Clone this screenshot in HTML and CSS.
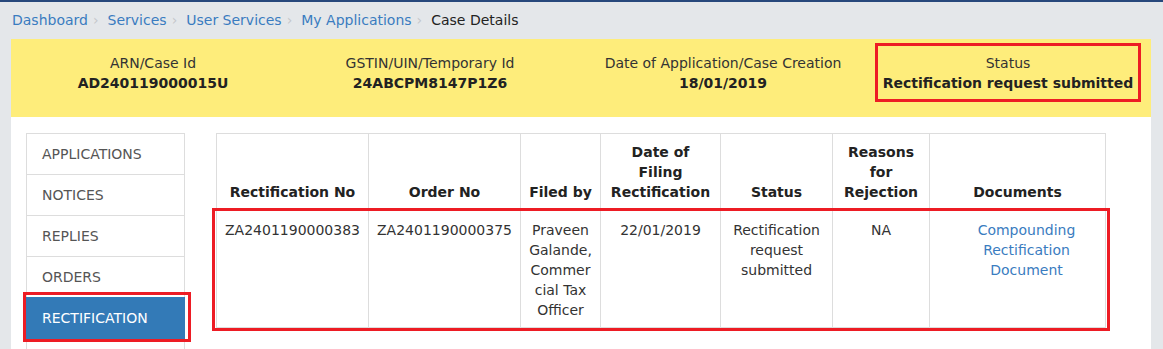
FILE: index.html
```html
<!DOCTYPE html>
<html lang="en">
<head>
    <meta charset="UTF-8">
    <meta name="viewport" content="width=device-width, initial-scale=1.0">
    <title>Case Details</title>
    <link rel="stylesheet" href="styles.css">
</head>
<body>
    <div class="topbar"></div>
    <div class="container">
        <ol class="breadcrumb">
            <li><a href="#">Dashboard</a></li>
            <li><a href="#">Services</a></li>
            <li><a href="#">User Services</a></li>
            <li><a href="#">My Applications</a></li>
            <li class="current">Case Details</li>
        </ol>

        <section class="case-info">
            <div class="case-col">
                <div class="case-box">
                    <p class="case-label">ARN/Case Id</p>
                    <p class="case-value">AD240119000015U</p>
                </div>
            </div>
            <div class="case-col">
                <div class="case-box">
                    <p class="case-label">GSTIN/UIN/Temporary Id</p>
                    <p class="case-value">24ABCPM8147P1Z6</p>
                </div>
            </div>
            <div class="case-col">
                <div class="case-box">
                    <p class="case-label">Date of Application/Case Creation</p>
                    <p class="case-value">18/01/2019</p>
                </div>
            </div>
            <div class="case-col">
                <div class="case-box marked">
                    <p class="case-label">Status</p>
                    <p class="case-value">Rectification request submitted</p>
                </div>
            </div>
        </section>

        <section class="content">
            <ul class="side-nav">
                <li class="nav-item">APPLICATIONS</li>
                <li class="nav-item">NOTICES</li>
                <li class="nav-item">REPLIES</li>
                <li class="nav-item">ORDERS</li>
                <li class="nav-item active">RECTIFICATION</li>
                <li class="nav-item empty"></li>
            </ul>

            <div class="table-wrap">
                <table class="data-table">
                    <colgroup>
                        <col style="width: 152px">
                        <col style="width: 152px">
                        <col style="width: 80px">
                        <col style="width: 120px">
                        <col style="width: 112px">
                        <col style="width: 97px">
                        <col style="width: 176px">
                    </colgroup>
                    <thead>
                        <tr>
                            <th>Rectification No</th>
                            <th>Order No</th>
                            <th>Filed by</th>
                            <th>Date of Filing Rectification</th>
                            <th>Status</th>
                            <th>Reasons for Rejection</th>
                            <th>Documents</th>
                        </tr>
                    </thead>
                    <tbody>
                        <tr>
                            <td>ZA2401190000383</td>
                            <td>ZA2401190000375</td>
                            <td>Praveen Galande, Commercial Tax Officer</td>
                            <td>22/01/2019</td>
                            <td>Rectification request submitted</td>
                            <td>NA</td>
                            <td class="doc-cell"><a href="#">Compounding Rectification Document</a></td>
                        </tr>
                    </tbody>
                </table>
                <div class="row-mark"></div>
            </div>
        </section>
    </div>
</body>
</html>
```

FILE: styles.css
```css
* {
    margin: 0;
    padding: 0;
    box-sizing: border-box;
}

body {
    background: #e4e7ea;
    font-family: 'DejaVu Sans', Verdana, sans-serif;
    font-size: 14px;
    line-height: 20px;
    color: #333;
}

a {
    color: #3a7cc0;
    text-decoration: none;
}

.topbar {
    height: 2px;
    background: #27487c;
}

.container {
    margin: 0 12px 0 11px;
}

/* breadcrumb */
.breadcrumb {
    list-style: none;
    display: flex;
    padding: 8px 1px 9px;
}

.breadcrumb li {
    color: #222;
}

.breadcrumb li + li::before {
    content: '›';
    color: #c4c8cc;
    padding: 0 9px 0 5px;
}

/* yellow case summary */
.case-info {
    display: grid;
    grid-template-columns: 284px 270px 316px 254px;
    background: #feed7b;
    padding: 7px 16px 18px 0;
    text-align: center;
}

.case-col {
    display: flex;
    justify-content: center;
}

.case-box {
    flex-shrink: 0;
    padding: 7px 5px 6px;
}

.case-label {
    color: #333;
}

.case-value {
    font-weight: bold;
    color: #222;
}

.marked {
    outline: 3px solid #ed1c24;
}

/* main white panel */
.content {
    display: flex;
    align-items: flex-start;
    gap: 31px;
    background: #fff;
    padding: 16px 15px 40px;
}

.side-nav {
    list-style: none;
    width: 159px;
    flex-shrink: 0;
}

.nav-item {
    border: 1px solid #ddd;
    margin-bottom: -1px;
    padding: 10px 15px;
    color: #555;
    background: #fff;
}

.nav-item.empty {
    height: 42px;
}

.nav-item.active {
    position: relative;
    background: #337ab7;
    border-color: #337ab7;
    color: #fff;
}

.nav-item.active::after {
    content: '';
    position: absolute;
    top: -6px;
    left: -4px;
    right: -7px;
    bottom: -4px;
    border: 3px solid #ed1c24;
}

.table-wrap {
    position: relative;
    width: 889px;
}

.data-table {
    width: 889px;
    table-layout: fixed;
    border-collapse: collapse;
    text-align: center;
    overflow-wrap: break-word;
}

.data-table th,
.data-table td {
    border: 1px solid #ddd;
}

.data-table th {
    vertical-align: bottom;
    padding: 8px 8px 6px;
    font-weight: bold;
    color: #222;
}

.data-table td {
    vertical-align: top;
    padding: 11px 8px 7px;
    color: #333;
}

.data-table td.doc-cell {
    padding-left: 26px;
}

.row-mark {
    position: absolute;
    top: 75px;
    left: -4px;
    right: -5px;
    bottom: -3px;
    border: 3px solid #ed1c24;
}
```
